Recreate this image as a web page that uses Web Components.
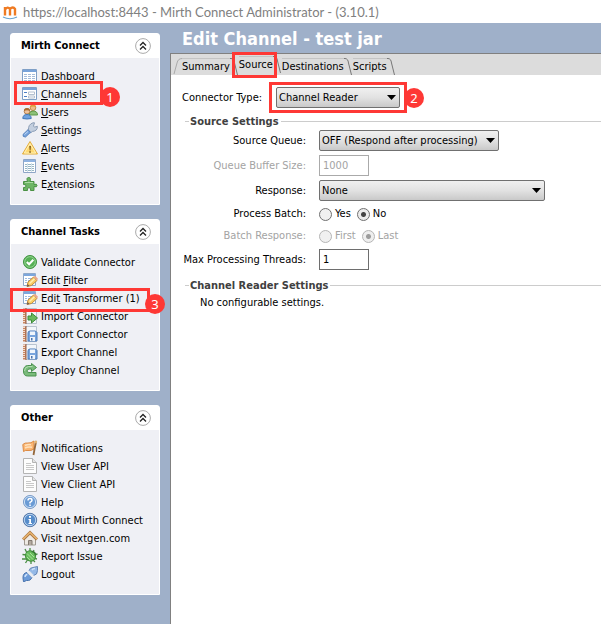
<!DOCTYPE html>
<html lang="en">
<head>
<meta charset="utf-8">
<title>Mirth Connect Administrator</title>
<style>
html,body{margin:0;min-height:100%}
body{background:#9fb0c9;font:11px/18px "DejaVu Sans Condensed","DejaVu Sans",sans-serif;color:#000}
</style>
</head>
<body>
<admin-window></admin-window>

<script>
const define=(name,html,setup)=>customElements.define(name,class extends HTMLElement{
  connectedCallback(){
    if(this.shadowRoot)return;
    const root=this.attachShadow({mode:'open'});
    const t=document.createElement('template');
    t.innerHTML=typeof html==='function'?html(this):html;
    root.append(t.content.cloneNode(true));
    if(setup)setup(this,root);
  }
});

const notebook='<path d="M3.500.5h11v15h-11z" fill="#f3f6fa" stroke="#b9c3d0"/><path d="M1 .5h3v15H1z" fill="#c98560"/><path d="M1 1.500h2M1 3.500h2M1 5.500h2M1 7.500h2M1 9.500h2M1 11.500h2M1 13.500h2" stroke="#f3ddcf"/><path d="M4 0v16" stroke="#94604a"/>';
const table='<path d="M.5 1.500h14v12H.5z" fill="#fff" stroke="#7f9fc6"/><path d="M1 2h13v2H1z" fill="#78a3da"/>';
const editForm='<path d="M1.500 1.500h12v12h-12z" fill="#fff" stroke="#8fa9ca"/><path d="M2 2h11v2H2z" fill="#7ca6dc"/><path d="M3 6.500h2M6 6.500h6M3 8.500h2M6 8.500h5M3 10.500h2" stroke="#9dbbe0"/><path d="M5 14.500l1-4.500 5.500-5 3.500 3.500-5.500 5z" fill="#f9cc63" stroke="#c08a3c"/><path d="M7.500 11.500l5-4.800" stroke="#fff0b0" stroke-width="1.500"/><path d="M5 14.500l.6-2.500 1.900 1.900z" fill="#655"/><path d="M11.500 5l1.500-1.200 3 3L15 8.500z" fill="#eca58a"/>';
const doc='<path d="M1.500.5h9l4 4v11h-13z" fill="#fdfdfd" stroke="#b4b4b4"/><path d="M10.500.5v4h4" fill="#e4e4e4" stroke="#b4b4b4"/><path d="M4 5.500h5M4 7.500h8M4 9.500h8M4 11.500h8" stroke="#c9c9c9"/>';
const disk=notebook+'<path d="M6 7q0-2 2-2h5.500L15 6.500v8.500H6z" fill="#7aa5dd" stroke="#4f7cb9"/><path d="M8 5.500h5v3.500H8z" fill="#f1f6fc"/><path d="M8 11h5v4H8z" fill="#f0f5fb"/><path d="M9 12h1.500v2.500H9z" fill="#4a73ac"/>';
const ICONS={
 dashboard:table+'<path d="M2 6.500h3M6 6.500h3M10 6.500h3M2 8.500h3M6 8.500h3M10 8.500h3M2 10.500h3M6 10.500h3M10 10.500h3M2 12.500h3M6 12.500h3M10 12.500h3" stroke="#a4bbda"/>',
 channels:table+'<path d="M2 6.500h3M2 10.500h3" stroke="#4d7fc4"/><path d="M6.500 6v2.500h6V6zM6.500 10v2h6v-2z" fill="#fff" stroke="#b4c0cf"/>',
 users:'<circle cx="11" cy="3.800" r="2.800" fill="#edbc88" stroke="#c08c4e"/><path d="M8 3.500Q8 .5 11 .5t3 3q-3-2-6 0" fill="#dda03f"/><path d="M7 11q0-4 4-4 4.500 0 4.500 4z" fill="#8cc178" stroke="#5c974c"/><circle cx="5" cy="7.300" r="2.800" fill="#efc49c" stroke="#b07f4e"/><path d="M2 6.800Q2 4 5 4t3 3q-3-1.500-6 0" fill="#ab6b30"/><path d="M.8 14.500q0-4 4.200-4t4.200 4q-4.200 1-8.400 0" fill="#6ea3e0" stroke="#4277b7"/>',
 settings:'<path d="M6.500 8Q6 2.500 11 .8h1.500L11.500 4l1 1.200 2.800-1q.5 4.800-5 5.300L8.500 11z" fill="#c3cfdf" stroke="#8b9db5"/><path d="M1 12.500l5-4.800 2.500 2.600-5 4.700q-3 .2-2.500-2.500" fill="#77a3dc" stroke="#5784c0"/><path d="M2.500 12.500l3.500-3" stroke="#c1daf7"/>',
 alerts:'<path d="M8 1.500l7.500 12.500H.5z" fill="#ffd970" stroke="#e3ac3d" stroke-linejoin="round"/><path d="M8 3.500l5.700 9.500H2.300z" fill="none" stroke="#fff2b9"/><path d="M7.300 6h1.600l-.4 4.500h-.8zM7.300 11.300h1.500v1.400H7.300z" fill="#765117"/>',
 events:'<path d="M1.500 1.500h12v13h-12z" fill="#fff" stroke="#8fa6c7"/><path d="M2 2h11v2H2z" fill="#8fb2e0"/><path d="M3 6.500h2M6 6.500h6M3 8.500h2M6 8.500h6M3 10.500h2M6 10.500h6M3 12.500h2M6 12.500h6" stroke="#98b6c4"/><path d="M5.500 5v9M9.500 5v9" stroke="#d3e2eb"/>',
 extensions:'<path d="M1.500 5.500h4Q4 1.500 6.700 1.500T8 5.500h4v3q3-1.200 3 1t-3 1v4H8.500q1-2.800-1.500-2.800t-1.500 2.800h-4v-3q2.500.5 2.500-1.500t-2.500-1.500z" fill="#6db565" stroke="#4a9144"/><path d="M3 6.500h8" stroke="#a9daa1"/>',
 validate:'<circle cx="8" cy="8" r="6.500" fill="#56b055" stroke="#3f9240"/><circle cx="8" cy="8" r="5.300" fill="none" stroke="#93d290"/><path d="M4.800 8l2.300 2.300 4.200-4.500" fill="none" stroke="#fff" stroke-width="2"/>',
 edit:editForm,
 import:notebook+'<path d="M6 8h3.500V5l6 5-6 5v-3H6z" fill="#6bb95e" stroke="#418c3a"/>',
 export:disk,
 deploy:'<path d="M9.500 1.500v2H5.500Q1.500 4 1.500 9t4 5h8.500v-3.500H7Q5 10.500 5 9t2-2h2.500v2.500L14.500 5.500z" fill="#7abb7b" stroke="#4a914f" stroke-linejoin="round"/><path d="M10.500 4.500H6.500Q2.500 5 2.500 9" fill="none" stroke="#b3deb2"/>',
 notifications:'<path d="M.8 4.500q2-2 5-1.500t6.200-2v8q-3 2-6 1.500T1.500 11.500z" fill="#fbb673" stroke="#dc8b45"/><path d="M3 5.500q3-1.500 6-.8M3 8q3-1.500 7-.8" stroke="#ffe0bb" fill="none" stroke-width="1.500"/><path d="M14 2q-1.500 7-2.500 13" fill="none" stroke="#96683c" stroke-width="1.800"/><circle cx="13.800" cy="2" r="1.400" fill="#e0b477"/>',
 doc,
 help:'<circle cx="8" cy="8" r="6.500" fill="#6a9bd5" stroke="#7b9cc6"/><circle cx="8" cy="8" r="5.600" fill="none" stroke="#ccdff5"/><path d="M6 6.400q0-1.900 2-1.900t2 1.700q0 1.200-2 2.200v1" fill="none" stroke="#fff" stroke-width="1.500"/><path d="M7.300 10.500h1.500v1.500H7.300z" fill="#fff"/>',
 about:'<circle cx="8" cy="8" r="6.700" fill="#568cca" stroke="#5577a6"/><circle cx="8" cy="8" r="5.700" fill="none" stroke="#bcd4f1"/><path d="M7 4h2v1.700H7zM6.500 7H9v4h1v1H6.500v-1h.8V8h-.8z" fill="#fff"/>',
 home:'<path d="M2.500 8v7h11V8L8 3z" fill="#eeeae4" stroke="#a09a92"/><path d="M6.500 15v-4.500h3.500V15" fill="#b3aaa1" stroke="#827a71"/><path d="M1 9.500l7-6.800 7 6.800" fill="none" stroke="#a97540" stroke-width="3"/><path d="M1 9.200l7-6.700 7 6.700" fill="none" stroke="#e6b370" stroke-width="1.600"/>',
 bug:'<path d="M3 1l2 4M8 0v5M.5 6.500L5 7M0 11h5M3.500 15L6 11M9 16v-4M15.500 6L11 7M15 11l-4-1M12 2l-2 4M13 14l-3-3" stroke="#4b8d44" stroke-width="1.300"/><ellipse cx="8.500" cy="8" rx="5" ry="5.300" transform="rotate(-35 8.500 8)" fill="#68be5e" stroke="#448f3e"/><path d="M5 5.500l6 6M5 9l3 3M8 5l4 4" stroke="#a9e098"/><path d="M9.500 3.500q4 0 4 4" stroke="#397a36" fill="none" stroke-width="1.500"/>',
 logout:'<path d="M7 5Q7.500 1.500 11 1.500L15.500 .5V4.500q0 4.500-4 5z" fill="#95b9e7" stroke="#6586b6"/><path d="M1 12Q.8 7 5 6.500L9.800 11.300q-.8 3.700-5.300 3.200l-3 1.300z" fill="#6c9bd9" stroke="#4772ad"/><path d="M5.200 6.200l5 5M6.800 5l4.700 4.700" stroke="#e2e7ee" stroke-width="1.200"/><path d="M3 11q.3-2.300 2.300-2.500M10 4q1-1.500 3-1.500" fill="none" stroke="#cfe3fb" stroke-width="1.500"/>'
};
define('app-icon',el=>`<style>:host{display:block;flex:none;width:16px;height:16px}svg{display:block}</style><svg width="16" height="16" viewBox="0 0 16 16" aria-hidden="true">${ICONS[el.getAttribute('name')]}</svg>`);

/* Red outline with a numbered badge, laid over its positioned parent */
define('step-mark',el=>`<style>
:host{position:absolute;pointer-events:none;z-index:2;box-sizing:border-box;border:3px solid #fe3835}
span{position:absolute;right:var(--badge-right,-20px);top:3px;width:20px;height:20px;border-radius:10px;background:#fe3835;color:#fff;font:13px/20px "Noto Sans",sans-serif;text-align:center}
</style>${el.hasAttribute('step')?`<span>${el.getAttribute('step')}</span>`:''}`);

define('title-bar',`<style>
:host{display:flex;align-items:center;gap:5px;height:23px;padding-left:2px;background:#fff;color:#808080;font:13px/22px Lato,"Noto Sans",sans-serif;white-space:nowrap}
svg{display:block}
</style><svg width="16" height="18" viewBox="0 0 16 18" aria-hidden="true"><path d="M3 12.500V4M3 6.500Q5.500 3 8 6v6.500M8 6q3-3 5 0v6.500" fill="none" stroke="#ef7b23" stroke-width="2.400"/><path d="M1 14q7 3.500 14 0" fill="none" stroke="#68a3cf" stroke-width="1.200"/></svg><slot></slot>`);

define('task-panel',el=>`<style>
:host{display:block;border:1px solid #fff;border-radius:3px 3px 0 0;background:#eff0f5}
header{display:flex;align-items:center;justify-content:space-between;height:24px;background:#fff;padding:0 8px 0 10px}
h2{margin:0;font:bold 11px/18px "DejaVu Sans Condensed","DejaVu Sans",sans-serif}
button{display:block;width:16px;height:16px;padding:0;border:0;background:none}
svg{display:block}
nav{padding:9px 0 11px 11px}
</style><header><h2>${el.getAttribute('heading')}</h2><button aria-label="Collapse"><svg width="16" height="16" viewBox="0 0 16 16"><circle cx="8" cy="8" r="7.400" fill="#fff" stroke="#aaa"/><path d="M5 7.500l3-3 3 3M5 11.500l3-3 3 3" fill="none" stroke="#222" stroke-width="1.300"/></svg></button></header><nav><slot></slot></nav>`);

define('task-item',el=>`<style>
:host{display:block;position:relative;height:18px}
a{display:flex;align-items:flex-start;gap:3px;color:#000;text-decoration:none;white-space:nowrap}
app-icon{padding-top:1px}
span{line-height:20px}
</style><a href="#"><app-icon name="${el.getAttribute('icon')}"></app-icon><span><slot></slot></span></a><slot name="mark"></slot>`);

define('side-bar',`<style>
:host{display:flex;flex-direction:column;gap:14px;width:150px;flex:none;padding:10px}
.a{left:-8px;top:-4px;width:89px;height:24px}
.b{left:-12px;top:-1px;width:140px;height:24px;--badge-right:-18px}
</style>
<task-panel heading="Mirth Connect">
<task-item icon="dashboard">Dashboard</task-item><task-item icon="channels"><u>C</u>hannels<step-mark slot="mark" class="a" step="1"></step-mark></task-item><task-item icon="users"><u>U</u>sers</task-item><task-item icon="settings"><u>S</u>ettings</task-item><task-item icon="alerts"><u>A</u>lerts</task-item><task-item icon="events"><u>E</u>vents</task-item><task-item icon="extensions">E<u>x</u>tensions</task-item>
</task-panel>
<task-panel heading="Channel Tasks">
<task-item icon="validate">Validate Connector</task-item><task-item icon="edit">Edit <u>F</u>ilter</task-item><task-item icon="edit">Edi<u>t</u> Transformer (1)<step-mark slot="mark" class="b" step="3"></step-mark></task-item><task-item icon="import">Import Connector</task-item><task-item icon="export">Export Connector</task-item><task-item icon="export">Export Channel</task-item><task-item icon="deploy">Deploy Channel</task-item>
</task-panel>
<task-panel heading="Other">
<task-item icon="notifications">Notifications</task-item><task-item icon="doc">View User API</task-item><task-item icon="doc">View Client API</task-item><task-item icon="help">Help</task-item><task-item icon="about">About Mirth Connect</task-item><task-item icon="home">Visit nextgen.com</task-item><task-item icon="bug">Report Issue</task-item><task-item icon="logout">Logout</task-item>
</task-panel>`);

define('tab-item',el=>`<style>
:host{display:flex;position:relative;height:17px}
:host([selected]){height:19px}
button{border:0;border-top:1px solid #c4c4c4;background:none;padding:0;margin:0;font:inherit;line-height:14px;color:#000;white-space:nowrap}
:host([selected]) button{padding-bottom:2px}
svg{display:block;flex:none}
</style><button role="tab" aria-selected="${el.hasAttribute('selected')}"><slot></slot></button><svg width="9" height="17" viewBox="0 0 9 17" aria-hidden="true"><path d="M0 .5h1Q4 .5 4.500 5L7.500 17" fill="none" stroke="#777"/></svg><slot name="mark"></slot>`);

define('tab-strip',`<style>
:host{display:flex;align-items:flex-end;height:21px;background:#dcdcdc;padding-left:2px}
svg{display:block;flex:none}
step-mark{left:-7px;top:-4px;width:45px;height:26px}
</style><svg width="9" height="17" viewBox="0 0 9 17" aria-hidden="true"><path d="M1 16L4 5Q5 .5 9 .5" fill="none" stroke="#aaa"/></svg>
<tab-item>Summary</tab-item><tab-item selected>Source<step-mark slot="mark"></step-mark></tab-item><tab-item>Destinations</tab-item><tab-item>Scripts</tab-item>`);

define('drop-down',el=>`<style>
:host{display:block;position:relative;width:var(--w)}
select{appearance:none;display:block;box-sizing:border-box;width:100%;height:21px;margin:0;padding:0 20px 0 2px;border:1px solid #707070;border-radius:2px;background:linear-gradient(#f0f0f0,#e2e2e2 50%,#c9c9c9);font:inherit;color:#000}
svg{position:absolute;right:4px;top:8px;pointer-events:none}
</style><select aria-label="${el.getAttribute('label')}"><option>${el.getAttribute('value')}</option></select><svg width="9" height="5" viewBox="0 0 9 5" aria-hidden="true"><path d="M0 0h9L4.500 5z"/></svg>`);

define('number-box',el=>`<style>
:host{display:block;width:50px}
input{display:block;box-sizing:border-box;width:100%;height:21px;margin:0;padding:0 3px;border:1px solid #6e6e6e;border-radius:0;background:#fff;font:inherit;color:#000}
input:disabled{border-color:#aaa;color:#a3a3a3}
</style><input aria-label="${el.getAttribute('label')}" value="${el.getAttribute('value')}" ${el.hasAttribute('disabled')?'disabled':''}>`);

define('radio-pair',el=>{
 const [a,b]=el.getAttribute('options').split(','),d=el.hasAttribute('disabled')?'disabled':'';
 return `<style>
:host{display:flex;gap:6px}
label{display:flex;align-items:center;gap:3px}
input{appearance:none;box-sizing:border-box;width:13px;height:13px;margin:0;border:1px solid #707070;border-radius:50%;background:#f0f0f0}
input:checked{background:radial-gradient(circle,#444 0 2px,#ececec 3px)}
:host([disabled]){color:#a3a3a3}
input:disabled{border-color:#b5b5b5}
input:disabled:checked{background:radial-gradient(circle,#9c9c9c 0 2px,#eee 3px)}
</style><label><input type="radio" name="r" ${d}>${a}</label><label><input type="radio" name="r" checked ${d}>${b}</label>`;});

define('group-title',`<style>
:host{display:flex;align-items:center;gap:1px;height:17px;padding-left:14px;color:#404040}
h3{margin:0;font:bold 11px/17px "DejaVu Sans Condensed","DejaVu Sans",sans-serif;white-space:nowrap}
i{height:1px;background:#ccc;width:4px}
i:last-child{flex:1;margin-left:1px}
</style><i></i><h3><slot></slot></h3><i></i>`);

define('channel-editor',`<style>
:host{display:block;flex:1;min-width:0}
h1{margin:0;height:30px;padding-left:12px;color:#fff;font:bold 18px/31px "DejaVu Sans Condensed","DejaVu Sans",sans-serif}
main{border-left:1px solid #808080;border-top:1px solid #808080;background:#fff;min-height:calc(100vh - 54px)}
.type{display:flex;align-items:center;height:21px;padding:12px 0 0 11px;white-space:nowrap}
.type span{width:94px}
.holder{position:relative}
.holder step-mark{left:-7px;top:-5px;width:138px;height:31px}
group-title{margin-top:5px}
.form{display:grid;grid-template-columns:135px 1fr;column-gap:13px;row-gap:4px;align-items:center;padding-bottom:2px}
.form>span{text-align:right;white-space:nowrap}
.off{color:#a3a3a3}
p{margin:0;padding-left:29px;line-height:18px}
</style>
<h1>Edit Channel - test jar</h1>
<main>
<tab-strip></tab-strip>
<div class="type"><span>Connector Type:</span><div class="holder"><drop-down label="Connector Type" value="Channel Reader" style="--w:124px"></drop-down><step-mark step="2"></step-mark></div></div>
<group-title>Source Settings</group-title>
<div class="form">
<span>Source Queue:</span><drop-down label="Source Queue" value="OFF (Respond after processing)" style="--w:180px"></drop-down>
<span class="off">Queue Buffer Size:</span><number-box label="Queue Buffer Size" value="1000" disabled></number-box>
<span>Response:</span><drop-down label="Response" value="None" style="--w:226px"></drop-down>
<span>Process Batch:</span><radio-pair options="Yes,No"></radio-pair>
<span class="off">Batch Response:</span><radio-pair options="First,Last" disabled></radio-pair>
<span>Max Processing Threads:</span><number-box label="Max Processing Threads" value="1"></number-box>
</div>
<group-title>Channel Reader Settings</group-title>
<p>No configurable settings.</p>
</main>`);

define('admin-window',`<style>
:host{display:block}
.body{display:flex;align-items:stretch}
</style>
<title-bar>https://localhost:8443 - Mirth Connect Administrator - (3.10.1)</title-bar>
<div class="body"><side-bar></side-bar><channel-editor></channel-editor></div>`);
</script>
</body>
</html>
